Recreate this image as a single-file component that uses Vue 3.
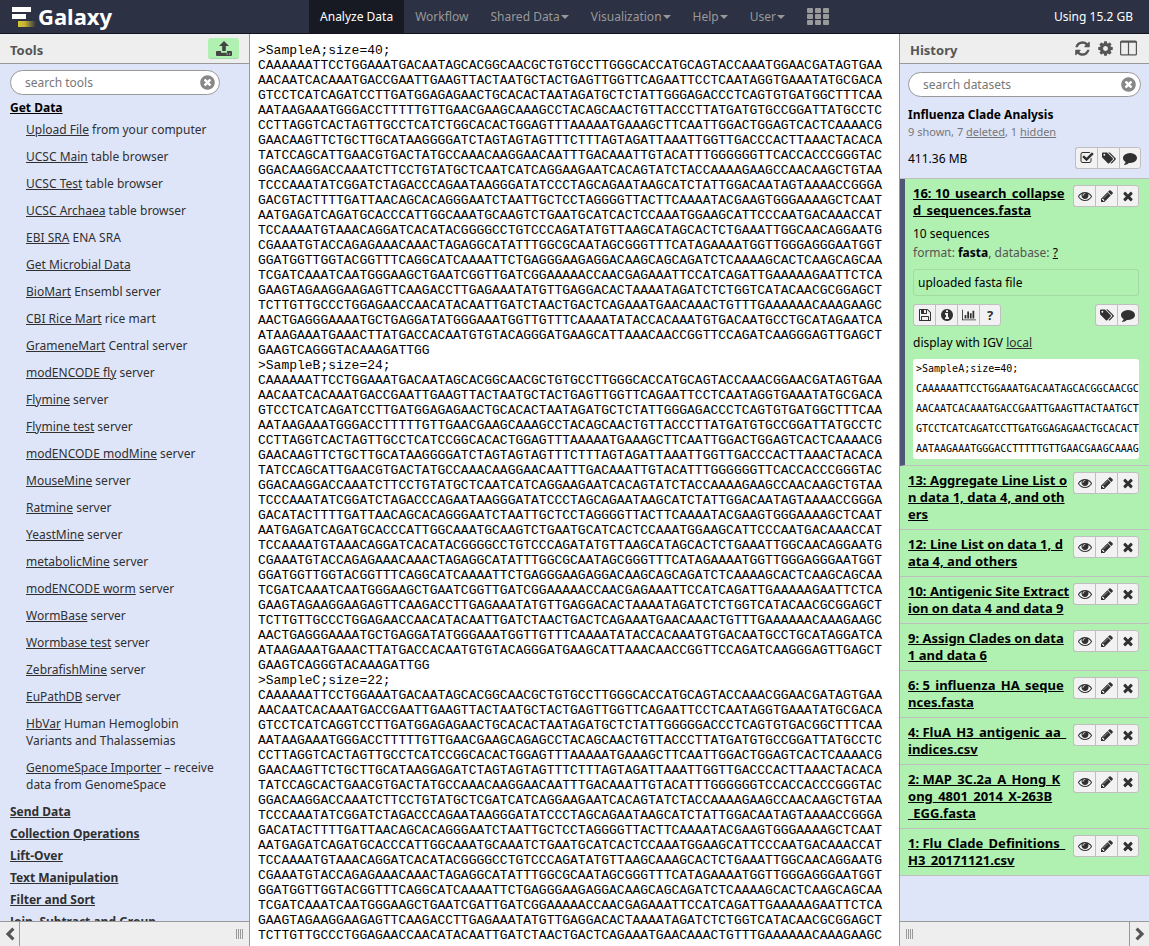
<script setup>
import { ref, h } from 'vue'

const icons = {
  times: ['0 0 1792 1792', 'M1490 1322q0 40-28 68l-136 136q-28 28-68 28t-68-28l-294-294-294 294q-28 28-68 28t-68-28l-136-136q-28-28-28-68t28-68l294-294-294-294q-28-28-28-68t28-68l136-136q28-28 68-28t68 28l294 294 294-294q28-28 68-28t68 28l136 136q28 28 28 68t-28 68l-294 294 294 294q28 28 28 68z'],
  eye: ['0 0 1792 1792', 'M1664 960q-152-236-381-353 61 104 61 225 0 185-131.5 316.5t-316.5 131.5-316.5-131.5-131.5-316.5q0-121 61-225-229 117-381 353 133 205 333.5 326.5t434.5 121.5 434.5-121.5 333.5-326.5zm-720-384q0-20-14-34t-34-14q-125 0-214.5 89.5t-89.5 214.5q0 20 14 34t34 14 34-14 14-34q0-86 61-147t147-61q20 0 34-14t14-34zm848 384q0 34-20 69-140 230-376.5 368.5t-499.5 138.5-499.5-139-376.5-368q-20-35-20-69t20-69q140-229 376.5-368t499.5-139 499.5 139 376.5 368q20 35 20 69z'],
  pencil: ['0 0 1792 1792', 'M491 1536l91-91-235-235-91 91v107h128v128h107zm523-928q0-22-22-22-10 0-17 7l-542 542q-7 7-7 17 0 22 22 22 10 0 17-7l542-542q7-7 7-17zm-54-192l416 416-832 832h-416v-416zm683 96q0 53-37 90l-166 166-416-416 166-165q36-38 90-38 53 0 91 38l235 234q37 39 37 91z'],
  comment: ['0 0 1792 1792', 'M1792 896q0 174-120 321.5t-326 233-450 85.5q-70 0-145-8-198 175-460 242-49 14-114 22-17 2-30.5-9t-17.5-29v-1q-3-4-.5-12t2-10 4.5-9.5l6-9 7-8.5 8-9q7-8 31-34.5t34.5-38 31-39.5 32.5-51 27-59 26-76q-157-89-247.5-220t-90.5-281q0-130 71-248.5t191-204.5 286-136.5 348-50.5q244 0 450 85.5t326 233 120 321.5z'],
  tags: ['0 0 1920 1792', 'M448 448q0-53-37.5-90.5t-90.5-37.5-90.5 37.5-37.5 90.5 37.5 90.5 90.5 37.5 90.5-37.5 37.5-90.5zm1067 576q0 53-37 90l-491 492q-39 37-91 37-53 0-90-37l-715-716q-38-37-64.5-101t-26.5-117v-416q0-52 38-90t90-38h416q53 0 117 26.5t102 64.5l715 714q37 39 37 91zm384 0q0 53-37 90l-491 492q-39 37-91 37-36 0-59-14t-53-45l470-470q37-37 37-90 0-52-37-91l-715-714q-38-38-102-64.5t-117-26.5h224q53 0 117 26.5t102 64.5l715 714q37 39 37 91z'],
  cog: ['0 0 1792 1792', 'M1152 896q0-106-75-181t-181-75-181 75-75 181 75 181 181 75 181-75 75-181zm512-109v222q0 12-8 23t-20 13l-185 28q-19 54-39 91 35 50 107 138 10 12 10 25t-9 23q-27 37-99 108t-94 71q-12 0-26-9l-138-108q-44 23-91 38-16 136-29 186-7 28-36 28h-222q-14 0-24.5-8.5t-11.5-21.5l-28-184q-49-16-90-37l-141 107q-10 9-25 9-14 0-25-11-126-114-165-168-7-10-7-23 0-12 8-23 15-21 51-66.5t54-70.5q-27-50-41-99l-183-27q-13-2-21-12.5t-8-23.5v-222q0-12 8-23t19-13l186-28q14-46 39-92-40-57-107-138-10-12-10-24 0-10 9-23 26-36 98.5-107.5t94.5-71.5q13 0 26 10l138 107q44-23 91-38 16-136 29-186 7-28 36-28h222q14 0 24.5 8.5t11.5 21.5l28 184q49 16 90 37l142-107q9-9 24-9 13 0 25 10 129 119 165 170 7 8 7 22 0 12-8 23-15 21-51 66.5t-54 70.5q26 50 41 98l183 28q13 2 21 12.5t8 23.5z'],
  refresh: ['0 0 1792 1792', 'M1639 1056q0 5-1 7-64 268-268 434.5t-478 166.5q-146 0-282.5-55t-243.5-157l-129 129q-19 19-45 19t-45-19-19-45v-448q0-26 19-45t45-19h448q26 0 45 19t19 45-19 45l-137 137q71 66 161 102t187 36q134 0 250-65t186-179q11-17 53-117 8-23 30-23h192q13 0 22.5 9.5t9.5 22.5zm25-800v448q0 26-19 45t-45 19h-448q-26 0-45-19t-19-45 19-45l138-138q-148-137-349-137-134 0-250 65t-186 179q-11 17-53 117-8 23-30 23h-199q-13 0-22.5-9.5t-9.5-22.5v-7q65-268 270-434.5t480-166.5q146 0 284 55.5t245 156.5l130-129q19-19 45-19t45 19 19 45z'],
  columns: ['0 0 17 16', 'M1.500 0h14q1.500 0 1.500 1.500v12q0 1.500-1.500 1.500h-14q-1.500 0-1.500-1.500v-12q0-1.500 1.500-1.500zM1.200 2.200v11.500h6.700v-11.500zM9.100 2.200v11.500h6.700v-11.500z'],
  check: ['0 0 1792 1792', 'M1472 930v318q0 119-84.5 203.5t-203.5 84.5h-832q-119 0-203.5-84.5t-84.5-203.5v-832q0-119 84.5-203.5t203.5-84.5h832q63 0 117 25 15 7 18 23 3 17-9 29l-49 49q-10 10-23 10-3 0-9-2-23-6-45-6h-832q-66 0-113 47t-47 113v832q0 66 47 113t113 47h832q66 0 113-47t47-113v-254q0-13 9-22l64-64q10-10 23-10 6 0 12 3 20 8 20 29zm231-489l-814 814q-24 24-57 24t-57-24l-430-430q-24-24-24-57t24-57l110-110q24-24 57-24t57 24l263 263 647-647q24-24 57-24t57 24l110 110q24 24 24 57t-24 57z'],
  clear: ['0 0 1792 1792', 'M1277 1122q0-26-19-45l-181-181 181-181q19-19 19-45 0-27-19-46l-90-90q-19-19-46-19-26 0-45 19l-181 181-181-181q-19-19-45-19-27 0-46 19l-90 90q-19 19-19 46 0 26 19 45l181 181-181 181q-19 19-19 45 0 27 19 46l90 90q19 19 46 19 26 0 45-19l181-181 181 181q19 19 45 19 27 0 46-19l90-90q19-19 19-46zm387-226q0 209-103 385.5t-279.5 279.5-385.5 103-385.5-103-279.5-279.5-103-385.5 103-385.5 279.5-279.5 385.5-103 385.5 103 279.5 279.5 103 385.5z'],
  info: ['0 0 1792 1792', 'M1152 1376v-160q0-14-9-23t-23-9h-96v-512q0-14-9-23t-23-9h-320q-14 0-23 9t-9 23v160q0 14 9 23t23 9h96v320h-96q-14 0-23 9t-9 23v160q0 14 9 23t23 9h448q14 0 23-9t9-23zm-128-896v-160q0-14-9-23t-23-9h-192q-14 0-23 9t-9 23v160q0 14 9 23t23 9h192q14 0 23-9t9-23zm640 416q0 209-103 385.5t-279.5 279.5-385.5 103-385.5-103-279.5-279.5-103-385.5 103-385.5 279.5-279.5 385.5-103 385.5 103 279.5 279.5 103 385.5z'],
  save: ['0 0 1792 1792', 'M512 1536h768v-384h-768v384zm896 0h128v-896q0-14-10-38.5t-20-34.5l-281-281q-10-10-34-20t-39-10v416q0 40-28 68t-68 28h-576q-40 0-68-28t-28-68v-416h-128v1280h128v-416q0-40 28-68t68-28h832q40 0 68 28t28 68v416zm-384-928v-320q0-13-9.5-22.500t-22.500-9.500h-192q-13 0-22.500 9.500t-9.500 22.500v320q0 13 9.500 22.500t22.500 9.500h192q13 0 22.500-9.500t9.500-22.500zm640 32v928q0 40-28 68t-68 28h-1344q-40 0-68-28t-28-68v-1344q0-40 28-68t68-28h928q40 0 88 20t76 48l280 280q28 28 48 76t20 88z'],
  chart: ['0 0 2048 1792', 'M640 896v512h-256v-512h256zm384-512v1024h-256v-1024h256zm1024 1152v128h-2048v-1536h128v1408h1920zm-640-896v768h-256v-768h256zm384-384v1152h-256v-1152h256z'],
  upload: ['0 0 16 15', 'M8 0l5 5h-3.200v5h-3.600v-5h-3.200zM1 10h4v1.700h6v-1.700h4q1 0 1 1v3q0 1-1 1h-14q-1 0-1-1v-3q0-1 1-1zM10.500 12.600v1h1.200v-1zM13 12.600v1h1.200v-1z'],
  left: ['0 0 10 14', 'M7.300 0.500l2.200 2.200-4.300 4.300 4.300 4.300-2.200 2.200-6.500-6.500z'],
  right: ['0 0 10 14', 'M2.700 0.500l-2.200 2.200 4.300 4.300-4.300 4.300 2.200 2.200 6.500-6.500z'],
}

const Icon = (props) =>
  h('svg', { viewBox: icons[props.name][0], class: 'ico', 'aria-hidden': 'true' }, [
    h('path', { d: icons[props.name][1], fill: 'currentColor', 'fill-rule': props.name === 'upload' || props.name === 'columns' ? 'evenodd' : 'nonzero' }),
  ])
Icon.props = ['name']

const toolQuery = ref('')
const dataQuery = ref('')

const menu = [
  { label: 'Analyze Data', active: true },
  { label: 'Workflow' },
  { label: 'Shared Data', caret: true },
  { label: 'Visualization', caret: true },
  { label: 'Help', caret: true },
  { label: 'User', caret: true },
]

const sources = [
  ['Upload File', ' from your computer'],
  ['UCSC Main', ' table browser'],
  ['UCSC Test', ' table browser'],
  ['UCSC Archaea', ' table browser'],
  ['EBI SRA', ' ENA SRA'],
  ['Get Microbial Data', ''],
  ['BioMart', ' Ensembl server'],
  ['CBI Rice Mart', ' rice mart'],
  ['GrameneMart', ' Central server'],
  ['modENCODE fly', ' server'],
  ['Flymine', ' server'],
  ['Flymine test', ' server'],
  ['modENCODE modMine', ' server'],
  ['MouseMine', ' server'],
  ['Ratmine', ' server'],
  ['YeastMine', ' server'],
  ['metabolicMine', ' server'],
  ['modENCODE worm', ' server'],
  ['WormBase', ' server'],
  ['Wormbase test', ' server'],
  ['ZebrafishMine', ' server'],
  ['EuPathDB', ' server'],
  ['HbVar', ' Human Hemoglobin\nVariants and Thalassemias'],
  ['GenomeSpace Importer', ' – receive\ndata from GenomeSpace'],
]

const sections = [
  'Send Data',
  'Collection Operations',
  'Lift-Over',
  'Text Manipulation',
  'Filter and Sort',
  'Join, Subtract and Group',
]

const fasta = `>SampleA;size=40;
CAAAAAATTCCTGGAAATGACAATAGCACGGCAACGCTGTGCCTTGGGCACCATGCAGTACCAAATGGAACGATAGTGAA
AACAATCACAAATGACCGAATTGAAGTTACTAATGCTACTGAGTTGGTTCAGAATTCCTCAATAGGTGAAATATGCGACA
GTCCTCATCAGATCCTTGATGGAGAGAACTGCACACTAATAGATGCTCTATTGGGAGACCCTCAGTGTGATGGCTTTCAA
AATAAGAAATGGGACCTTTTTGTTGAACGAAGCAAAGCCTACAGCAACTGTTACCCTTATGATGTGCCGGATTATGCCTC
CCTTAGGTCACTAGTTGCCTCATCTGGCACACTGGAGTTTAAAAATGAAAGCTTCAATTGGACTGGAGTCACTCAAAACG
GAACAAGTTCTGCTTGCATAAGGGGATCTAGTAGTAGTTTCTTTAGTAGATTAAATTGGTTGACCCACTTAAACTACACA
TATCCAGCATTGAACGTGACTATGCCAAACAAGGAACAATTTGACAAATTGTACATTTGGGGGGTTCACCACCCGGGTAC
GGACAAGGACCAAATCTTCCTGTATGCTCAATCATCAGGAAGAATCACAGTATCTACCAAAAGAAGCCAACAAGCTGTAA
TCCCAAATATCGGATCTAGACCCAGAATAAGGGATATCCCTAGCAGAATAAGCATCTATTGGACAATAGTAAAACCGGGA
GACGTACTTTTGATTAACAGCACAGGGAATCTAATTGCTCCTAGGGGTTACTTCAAAATACGAAGTGGGAAAAGCTCAAT
AATGAGATCAGATGCACCCATTGGCAAATGCAAGTCTGAATGCATCACTCCAAATGGAAGCATTCCCAATGACAAACCAT
TCCAAAATGTAAACAGGATCACATACGGGGCCTGTCCCAGATATGTTAAGCATAGCACTCTGAAATTGGCAACAGGAATG
CGAAATGTACCAGAGAAACAAACTAGAGGCATATTTGGCGCAATAGCGGGTTTCATAGAAAATGGTTGGGAGGGAATGGT
GGATGGTTGGTACGGTTTCAGGCATCAAAATTCTGAGGGAAGAGGACAAGCAGCAGATCTCAAAAGCACTCAAGCAGCAA
TCGATCAAATCAATGGGAAGCTGAATCGGTTGATCGGAAAAACCAACGAGAAATTCCATCAGATTGAAAAAGAATTCTCA
GAAGTAGAAGGAAGAGTTCAAGACCTTGAGAAATATGTTGAGGACACTAAAATAGATCTCTGGTCATACAACGCGGAGCT
TCTTGTTGCCCTGGAGAACCAACATACAATTGATCTAACTGACTCAGAAATGAACAAACTGTTTGAAAAAACAAAGAAGC
AACTGAGGGAAAATGCTGAGGATATGGGAAATGGTTGTTTCAAAATATACCACAAATGTGACAATGCCTGCATAGAATCA
ATAAGAAATGAAACTTATGACCACAATGTGTACAGGGATGAAGCATTAAACAACCGGTTCCAGATCAAGGGAGTTGAGCT
GAAGTCAGGGTACAAAGATTGG
>SampleB;size=24;
CAAAAAATTCCTGGAAATGACAATAGCACGGCAACGCTGTGCCTTGGGCACCATGCAGTACCAAACGGAACGATAGTGAA
AACAATCACAAATGACCGAATTGAAGTTACTAATGCTACTGAGTTGGTTCAGAATTCCTCAATAGGTGAAATATGCGACA
GTCCTCATCAGATCCTTGATGGAGAGAACTGCACACTAATAGATGCTCTATTGGGAGACCCTCAGTGTGATGGCTTTCAA
AATAAGAAATGGGACCTTTTTGTTGAACGAAGCAAAGCCTACAGCAACTGTTACCCTTATGATGTGCCGGATTATGCCTC
CCTTAGGTCACTAGTTGCCTCATCCGGCACACTGGAGTTTAAAAATGAAAGCTTCAATTGGACTGGAGTCACTCAAAACG
GAACAAGTTCTGCTTGCATAAGGGGATCTAGTAGTAGTTTCTTTAGTAGATTAAATTGGTTGACCCACTTAAACTACACA
TATCCAGCATTGAACGTGACTATGCCAAACAAGGAACAATTTGACAAATTGTACATTTGGGGGGTTCACCACCCGGGTAC
GGACAAGGACCAAATCTTCCTGTATGCTCAATCATCAGGAAGAATCACAGTATCTACCAAAAGAAGCCAACAAGCTGTAA
TCCCAAATATCGGATCTAGACCCAGAATAAGGGATATCCCTAGCAGAATAAGCATCTATTGGACAATAGTAAAACCGGGA
GACATACTTTTGATTAACAGCACAGGGAATCTAATTGCTCCTAGGGGTTACTTCAAAATACGAAGTGGGAAAAGCTCAAT
AATGAGATCAGATGCACCCATTGGCAAATGCAAGTCTGAATGCATCACTCCAAATGGAAGCATTCCCAATGACAAACCAT
TCCAAAATGTAAACAGGATCACATACGGGGCCTGTCCCAGATATGTTAAGCATAGCACTCTGAAATTGGCAACAGGAATG
CGAAATGTACCAGAGAAACAAACTAGAGGCATATTTGGCGCAATAGCGGGTTTCATAGAAAATGGTTGGGAGGGAATGGT
GGATGGTTGGTACGGTTTCAGGCATCAAAATTCTGAGGGAAGAGGACAAGCAGCAGATCTCAAAAGCACTCAAGCAGCAA
TCGATCAAATCAATGGGAAGCTGAATCGGTTGATCGGAAAAACCAACGAGAAATTCCATCAGATTGAAAAAGAATTCTCA
GAAGTAGAAGGAAGAGTTCAAGACCTTGAGAAATATGTTGAGGACACTAAAATAGATCTCTGGTCATACAACGCGGAGCT
TCTTGTTGCCCTGGAGAACCAACATACAATTGATCTAACTGACTCAGAAATGAACAAACTGTTTGAAAAAACAAAGAAGC
AACTGAGGGAAAATGCTGAGGATATGGGAAATGGTTGTTTCAAAATATACCACAAATGTGACAATGCCTGCATAGGATCA
ATAAGAAATGAAACTTATGACCACAATGTGTACAGGGATGAAGCATTAAACAACCGGTTCCAGATCAAGGGAGTTGAGCT
GAAGTCAGGGTACAAAGATTGG
>SampleC;size=22;
CAAAAAATTCCTGGAAATGACAATAGCACGGCAACGCTGTGCCTTGGGCACCATGCAGTACCAAACGGAACGATAGTGAA
AACAATCACAAATGACCGAATTGAAGTTACTAATGCTACTGAGTTGGTTCAGAATTCCTCAATAGGTGAAATATGCGACA
GTCCTCATCAGGTCCTTGATGGAGAGAACTGCACACTAATAGATGCTCTATTGGGGGACCCTCAGTGTGACGGCTTTCAA
AATAAGAAATGGGACCTTTTTGTTGAACGAAGCAGAGCCTACAGCAACTGTTACCCTTATGATGTGCCGGATTATGCCTC
CCTTAGGTCACTAGTTGCCTCATCCGGCACACTGGAGTTTAAAAATGAAAGCTTCAATTGGACTGGAGTCACTCAAAACG
GAACAAGTTCTGCTTGCATAAGGAGATCTAGTAGTAGTTTCTTTAGTAGATTAAATTGGTTGACCCACTTAAACTACACA
TATCCAGCACTGAACGTGACTATGCCAAACAAGGAACAATTTGACAAATTGTACATTTGGGGGGTCCACCACCCGGGTAC
GGACAAGGACCAAATCTTCCTGTATGCTCGATCATCAGGAAGAATCACAGTATCTACCAAAAGAAGCCAACAAGCTGTAA
TCCCAAATATCGGATCTAGACCCAGAATAAGGGATATCCCTAGCAGAATAAGCATCTATTGGACAATAGTAAAACCGGGA
GACATACTTTTGATTAACAGCACAGGGAATCTAATTGCTCCTAGGGGTTACTTCAAAATACGAAGTGGGAAAAGCTCAAT
AATGAGATCAGATGCACCCATTGGCAAATGCAAATCTGAATGCATCACTCCAAATGGAAGCATTCCCAATGACAAACCAT
TCCAAAATGTAAACAGGATCACATACGGGGCCTGTCCCAGATATGTTAAGCAAAGCACTCTGAAATTGGCAACAGGAATG
CGAAATGTACCAGAGAAACAAACTAGAGGCATATTTGGCGCAATAGCGGGTTTCATAGAAAATGGTTGGGAGGGAATGGT
GGATGGTTGGTACGGTTTCAGGCATCAAAATTCTGAGGGAAGAGGACAAGCAGCAGATCTCAAAAGCACTCAAGCAGCAA
TCGATCAAATCAATGGGAAGCTGAATCGATTGATCGGAAAAACCAACGAGAAATTCCATCAGATTGAAAAAGAATTCTCA
GAAGTAGAAGGAAGAGTTCAAGACCTTGAGAAATATGTTGAGGACACTAAAATAGATCTCTGGTCATACAACGCGGAGCT
TCTTGTTGCCCTGGAGAACCAACATACAATTGATCTAACTGACTCAGAAATGAACAAACTGTTTGAAAAAACAAAGAAGC`

const peek = fasta.split('\n').slice(0, 5).join('\n')

const datasets = [
  { name: '16: 10_usearch_collapse\nd_sequences.fasta', open: true },
  { name: '13: Aggregate Line List o\nn data 1, data 4, and oth\ners' },
  { name: '12: Line List on data 1, d\nata 4, and others' },
  { name: '10: Antigenic Site Extract\nion on data 4 and data 9' },
  { name: '9: Assign Clades on data\n1 and data 6' },
  { name: '6: 5_influenza_HA_seque\nnces.fasta' },
  { name: '4: FluA_H3_antigenic_aa_\nindices.csv' },
  { name: '2: MAP_3C.2a_A_Hong_K\nong_4801_2014_X-263B\n_EGG.fasta' },
  { name: '1: Flu_Clade_Definitions_\nH3_20171121.csv' },
]
</script>

<template>
  <div class="app">
    <header class="masthead">
      <a class="brand" href="#">
        <svg class="logo" viewBox="0 0 24 20" aria-hidden="true">
          <defs>
            <linearGradient id="beam" x1="0" x2="1">
              <stop offset="0" stop-color="#d9c62f" />
              <stop offset="0.4" stop-color="#c0ae35" />
              <stop offset="1" stop-color="#2c3143" />
            </linearGradient>
          </defs>
          <rect x="0" y="0" width="19" height="5" fill="#fff" />
          <rect x="0" y="7" width="14" height="5" fill="#fff" />
          <rect x="6" y="14" width="18" height="6" fill="url(#beam)" />
        </svg>
        <span>Galaxy</span>
      </a>
      <nav class="menu">
        <a v-for="m in menu" :key="m.label" href="#" :class="{ active: m.active }">{{ m.label }}<i v-if="m.caret" class="caret"></i></a>
        <a href="#" class="grid-link" aria-label="Apps">
          <svg class="apps" viewBox="0 0 22 17" aria-hidden="true">
            <template v-for="r in 3" :key="r">
              <rect v-for="c in 3" :key="c" :x="(c - 1) * 8" :y="(r - 1) * 6" width="6" height="5" rx="1" fill="#999" />
            </template>
          </svg>
        </a>
      </nav>
      <span class="quota">Using 15.2 GB</span>
    </header>

    <aside class="panel left">
      <div class="heading">
        <h2>Tools</h2>
        <button class="upload" type="button" aria-label="Upload data"><Icon name="upload" /></button>
      </div>
      <div class="body tools">
        <div class="search">
          <input v-model="toolQuery" type="text" placeholder="search tools" aria-label="search tools" />
          <button type="button" aria-label="Clear tool search"><Icon name="clear" /></button>
        </div>
        <a class="section first" href="#">Get Data</a>
        <ul class="sources">
          <li v-for="s in sources" :key="s[0]"><a href="#">{{ s[0] }}</a>{{ s[1] }}</li>
        </ul>
        <a v-for="s in sections" :key="s" class="section" href="#">{{ s }}</a>
      </div>
      <footer class="foot">
        <button class="toggle" type="button" aria-label="Collapse tools"><Icon name="left" /></button>
        <span class="grip"></span>
      </footer>
    </aside>

    <main class="center"><pre>{{ fasta }}</pre></main>

    <aside class="panel right">
      <div class="heading">
        <h2>History</h2>
        <div class="actions">
          <button type="button" aria-label="Refresh history"><Icon name="refresh" /></button>
          <button type="button" aria-label="History options"><Icon name="cog" /></button>
          <button type="button" aria-label="View all histories"><Icon name="columns" /></button>
        </div>
      </div>
      <div class="body">
        <div class="summary">
          <div class="search">
            <input v-model="dataQuery" type="text" placeholder="search datasets" aria-label="search datasets" />
            <button type="button" aria-label="Clear dataset search"><Icon name="clear" /></button>
          </div>
          <h3>Influenza Clade Analysis</h3>
          <p class="counts">9 shown, 7 <a href="#">deleted</a>, 1 <a href="#">hidden</a></p>
          <div class="row size">
            <span>411.36 MB</span>
            <div class="group">
              <button type="button" aria-label="Select datasets"><Icon name="check" /></button>
              <button type="button" aria-label="Edit history tags"><Icon name="tags" /></button>
              <button type="button" aria-label="Edit history annotation"><Icon name="comment" /></button>
            </div>
          </div>
        </div>
        <article v-for="d in datasets" :key="d.name" class="dataset" :class="{ open: d.open }">
          <div class="title">
            <a href="#">{{ d.name }}</a>
            <div class="group">
              <button type="button" aria-label="View data"><Icon name="eye" /></button>
              <button type="button" aria-label="Edit attributes"><Icon name="pencil" /></button>
              <button type="button" aria-label="Delete"><Icon name="times" /></button>
            </div>
          </div>
          <div v-if="d.open" class="details">
            <p>10 sequences</p>
            <p class="format">format: <b>fasta</b>, database: <a href="#">?</a></p>
            <div class="blurb">uploaded fasta file</div>
            <div class="row">
              <div class="group">
                <button type="button" aria-label="Download"><Icon name="save" /></button>
                <button type="button" aria-label="View details"><Icon name="info" /></button>
                <button type="button" aria-label="Visualize"><Icon name="chart" /></button>
                <button type="button" class="help">?</button>
              </div>
              <div class="group">
                <button type="button" aria-label="Edit dataset tags"><Icon name="tags" /></button>
                <button type="button" aria-label="Edit dataset annotation"><Icon name="comment" /></button>
              </div>
            </div>
            <p class="display">display with IGV <a href="#">local</a></p>
            <pre class="peek">{{ peek }}</pre>
          </div>
        </article>
      </div>
      <footer class="foot">
        <span class="grip"></span>
        <button class="toggle" type="button" aria-label="Collapse history"><Icon name="right" /></button>
      </footer>
    </aside>
  </div>
</template>

<style>
body {
  margin: 0;
}
</style>

<style scoped>
.app {
  display: grid;
  grid-template-columns: 250px minmax(0, 1fr) 250px;
  grid-template-rows: 34px minmax(0, 1fr);
  height: 100vh;
  overflow: hidden;
  background: #fff;
  color: #303030;
  font: 12px/17px "Noto Sans", sans-serif;
}
.app * {
  box-sizing: border-box;
}
button,
input {
  font: inherit;
  color: inherit;
}
button {
  display: flex;
  align-items: center;
  justify-content: center;
  padding: 0;
  border: 0;
  background: none;
}
a {
  color: inherit;
}
h2,
h3,
p,
ul,
pre {
  margin: 0;
  padding: 0;
}
.ico {
  display: block;
  width: 14px;
  height: 14px;
}

.masthead {
  grid-column: 1 / -1;
  display: grid;
  grid-template-columns: 1fr auto 1fr;
  background: #2c3143;
  border-bottom: 1px solid #15131f;
  color: #fff;
}
.brand {
  display: flex;
  align-items: center;
  gap: 2px;
  padding-left: 12px;
  color: #fff;
  font-size: 22px;
  font-weight: 700;
  text-decoration: none;
}
.logo {
  width: 24px;
  height: 20px;
}
.menu {
  display: flex;
}
.menu a {
  display: flex;
  align-items: center;
  padding: 0 11px;
  color: #999;
  text-decoration: none;
}
.menu a.active {
  background: #181a23;
  color: #fff;
}
.caret {
  margin-left: 1px;
  border: 4px solid transparent;
  border-top-color: #999;
  border-bottom: 0;
}
.apps {
  width: 22px;
  height: 17px;
}
.quota {
  align-self: center;
  justify-self: end;
  padding-right: 16px;
}

.panel {
  display: flex;
  flex-direction: column;
  min-height: 0;
  background: #dfe5f9;
}
.left {
  border-right: 1px solid #999;
}
.right {
  border-left: 1px solid #999;
}
.heading {
  flex: none;
  display: flex;
  align-items: center;
  justify-content: space-between;
  height: 30px;
  padding: 0 10px;
  background: #eee;
  border-bottom: 1px solid #999;
  color: #555;
}
.right .heading {
  padding-right: 12px;
}
.heading h2 {
  padding-top: 3px;
  font-size: 13px;
}
.upload {
  width: 31px;
  height: 21px;
  border-radius: 3px;
  background: #b0f0b0;
  border-bottom: 1px solid #9fdc9f;
  color: #444;
}
.upload .ico {
  width: 16px;
  height: 15px;
}
.actions {
  display: flex;
  gap: 6px;
}
.actions .ico {
  width: 17px;
  height: 17px;
}
.body {
  flex: 1;
  min-height: 0;
  overflow: hidden;
}
.tools {
  padding: 6px 10px 0;
}
.search {
  display: flex;
  align-items: center;
  height: 25px;
  padding: 0 3px 0 14px;
  border: 1px solid #999;
  border-radius: 13px;
  background: #fff;
}
.left .search {
  margin-right: 19px;
}
.search input {
  flex: 1;
  min-width: 0;
  padding: 0;
  border: 0;
  outline: 0;
  background: none;
}
.search input::placeholder {
  color: #777;
  opacity: 1;
}
.search button {
  color: #888;
}
.search .ico {
  width: 17px;
  height: 17px;
}
.section {
  display: block;
  margin-bottom: 5px;
  font-weight: 700;
}
.section.first {
  margin-top: 4px;
  color: #000;
}
.sources {
  padding-left: 16px;
  list-style: none;
}
.sources li {
  margin-bottom: 10px;
  white-space: pre-line;
}
.foot {
  flex: none;
  display: flex;
  align-items: center;
  justify-content: space-between;
  height: 25px;
  border-top: 1px solid #999;
  background: #eee;
}
.toggle {
  align-self: stretch;
  width: 20px;
  color: #555;
}
.toggle .ico {
  width: 10px;
}
.left .toggle {
  border-right: 1px solid #999;
}
.right .toggle {
  border-left: 1px solid #999;
}
.grip {
  width: 7px;
  height: 10px;
  margin: 0 6px;
  background: repeating-linear-gradient(90deg, #999 0 1px, transparent 1px 2px);
}

.center {
  overflow: hidden;
  padding: 9px 8px 0;
  color: #000;
}
.center pre {
  font: 13px/15px "Liberation Mono", monospace;
}

.summary {
  padding: 8px 8px 9px;
  border-bottom: 1px solid #bfbfbf;
}
.summary h3 {
  margin-top: 9px;
  color: #000;
  font-size: 12px;
}
.counts {
  color: #777;
  font-size: 11px;
}
.row {
  display: flex;
  align-items: center;
  justify-content: space-between;
}
.size {
  margin-top: 7px;
  color: #000;
}
.group {
  flex: none;
  display: flex;
  color: #303030;
}
.group button {
  width: 22px;
  height: 22px;
  border: 1px solid #bfbfbf;
  border-right-width: 0;
  background: #f2f2f2;
}
.group button:first-child {
  border-radius: 3px 0 0 3px;
}
.group button:last-child {
  border-right-width: 1px;
  border-radius: 0 3px 3px 0;
}
.group .help {
  font-size: 13px;
  font-weight: 700;
}
.dataset {
  padding: 6px 10px 6px 8px;
  border-bottom: 1px solid #bfbfbf;
  background: #b0f0b0;
  color: #000;
}
.dataset.open {
  border-left: 5px solid #4f5777;
}
.title {
  display: flex;
  align-items: flex-start;
  justify-content: space-between;
}
.title a {
  font-size: 13px;
  font-weight: 700;
  white-space: pre;
}
.details {
  margin-top: 6px;
}
.details p {
  margin-bottom: 2px;
}
.format {
  color: #555;
}
.format b,
.format a {
  color: #000;
}
.blurb {
  margin: 8px 0;
  padding: 4px;
  border: 1px solid #a3d9a3;
  border-radius: 3px;
}
.details .display {
  margin: 8px 0;
}
.display a {
  color: #303030;
}
.peek {
  overflow: hidden;
  padding: 0 3px;
  border-radius: 3px;
  background: #fff;
  font: 10px/20px "DejaVu Sans Mono", monospace;
}
</style>
